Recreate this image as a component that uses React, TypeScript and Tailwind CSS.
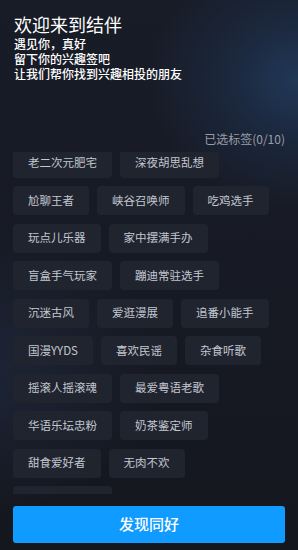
import React from 'react';

const tagRows: string[][] = [
  ['老二次元肥宅', '深夜胡思乱想'],
  ['尬聊王者', '峡谷召唤师', '吃鸡选手'],
  ['玩点儿乐器', '家中摆满手办'],
  ['盲盒手气玩家', '蹦迪常驻选手'],
  ['沉迷古风', '爱逛漫展', '追番小能手'],
  ['国漫YYDS', '喜欢民谣', '杂食听歌'],
  ['摇滚人摇滚魂', '最爱粤语老歌'],
  ['华语乐坛忠粉', '奶茶鉴定师'],
  ['甜食爱好者', '无肉不欢'],
  ['电影院常客哦'],
];

function Tag({ label }: { label: string }) {
  return (
    <button className="h-[29px] px-[15px] rounded-[4px] bg-[#20242f] text-[11.5px] text-[#c3c7cf] whitespace-nowrap leading-none">
      {label}
    </button>
  );
}

export default function App() {
  return (
    <div
      className="w-[298px] h-[550px] overflow-hidden text-white bg-[#161921] bg-[radial-gradient(ellipse_150px_130px_at_100%_80px,#213858_0%,rgba(30,50,80,0.55)_45%,transparent_100%),radial-gradient(ellipse_160px_140px_at_0%_370px,rgba(32,44,66,0.6)_0%,transparent_100%),linear-gradient(180deg,#181c27_0%,#171a24_45%,#15171f_100%)]"
      style={{ fontFamily: '"Noto Sans CJK SC", "Noto Sans", sans-serif' }}
    >
      <div className="px-[13px] pt-[11px]">
        <h1 className="text-[18px] leading-[26px] pl-px">欢迎来到结伴</h1>
        <div className="text-[12px] leading-[15px] font-medium pl-px -mt-px">
          <p>遇见你，真好</p>
          <p>留下你的兴趣签吧</p>
          <p>让我们帮你找到兴趣相投的朋友</p>
        </div>
        <div className="mt-[50px] text-right text-[12px] leading-[16px] text-[#9a9ea8]">
          已选标签(0/10)
        </div>
      </div>

      <div className="mt-[5px] mx-[13px] h-[342px] overflow-hidden">
        <div className="-mt-[3.5px] flex flex-col gap-y-[8.5px]">
          {tagRows.map((row, i) => (
            <div key={i} className="flex gap-x-[8px]">
              {row.map((t) => (
                <Tag key={t} label={t} />
              ))}
            </div>
          ))}
        </div>
      </div>

      <div className="px-[13px] mt-[12px]">
        <button className="w-full h-[37px] rounded-[3px] bg-[#0f9bff] text-white text-[15px] font-medium">
          发现同好
        </button>
      </div>
    </div>
  );
}
